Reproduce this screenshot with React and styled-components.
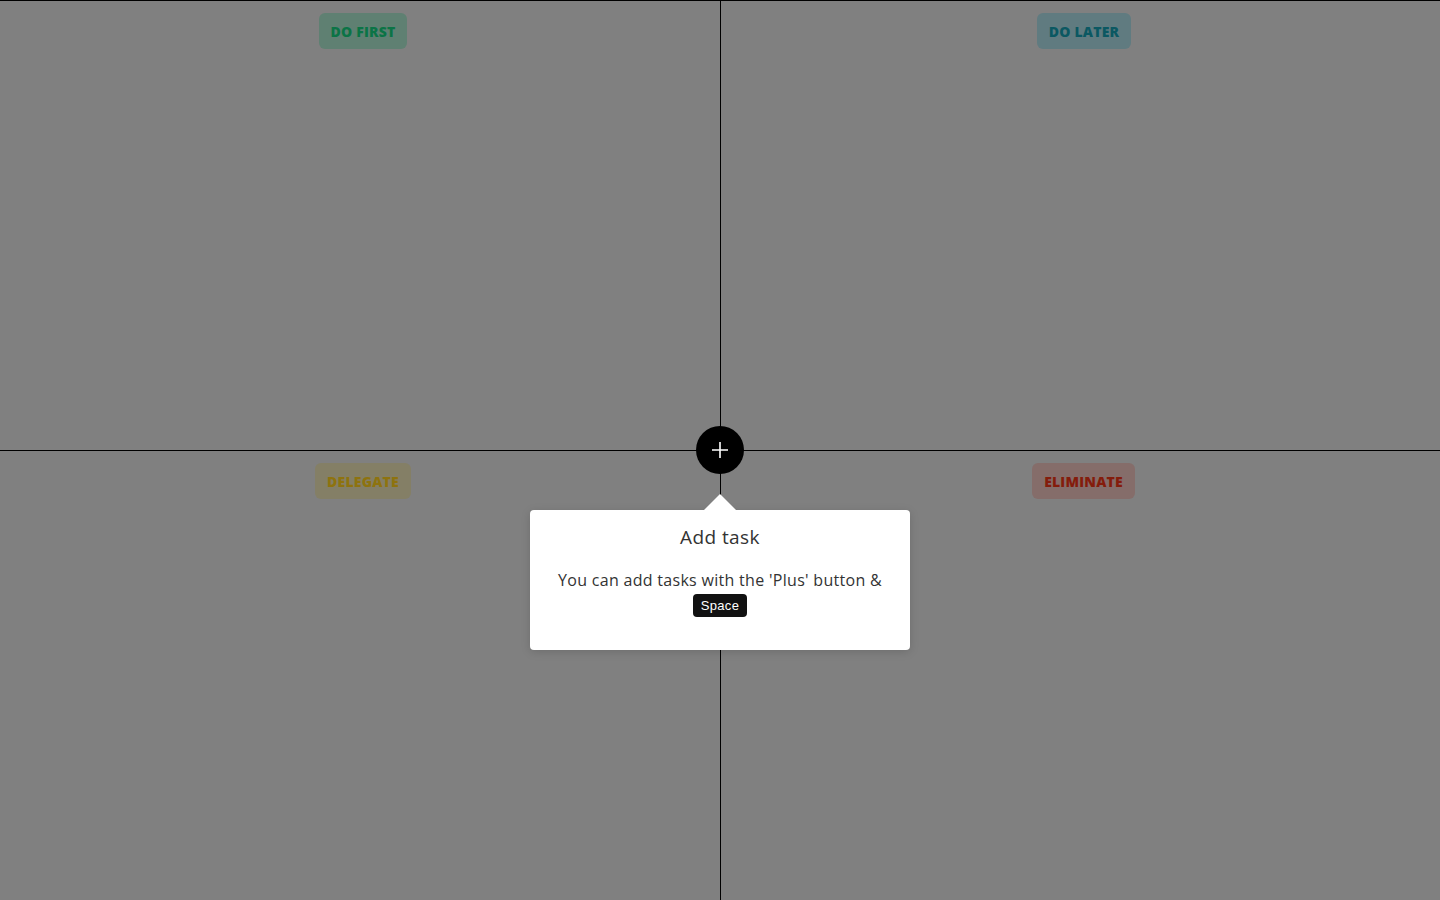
import React from "react";
import styled, { createGlobalStyle } from "styled-components";

const GlobalStyle = createGlobalStyle`
  html, body {
    margin: 0;
    padding: 0;
    background: #808080;
    font-family: "Open Sans", "Noto Sans", sans-serif;
    overflow: hidden;
  }
  * { box-sizing: border-box; }
`;

const Board = styled.div`
  position: relative;
  height: 100vh;
  display: grid;
  grid-template-columns: 720px 1fr;
  grid-template-rows: 449px 1fr;
  gap: 1px;
  padding-top: 1px;
  background: #000;
`;

const Quadrant = styled.section`
  background: #808080;
  display: flex;
  justify-content: center;
  align-items: flex-start;
  padding: 12px 0 0 ${({ $shift }) => $shift}px;
`;

const Badge = styled.span`
  height: 36px;
  padding: 0 12px;
  border-radius: 6px;
  display: inline-flex;
  align-items: center;
  font-size: 14px;
  font-weight: 800;
  letter-spacing: 0.2px;
  text-transform: uppercase;
  background: ${({ $bg }) => $bg};
  color: ${({ $fg }) => $fg};
`;

const PlusButton = styled.button`
  position: absolute;
  left: 696px;
  top: 426px;
  width: 48px;
  height: 48px;
  border-radius: 50%;
  border: none;
  background: #000;
  color: #fff;
  display: flex;
  align-items: center;
  justify-content: center;
  padding: 0;
`;

const Popover = styled.div`
  position: absolute;
  left: 530px;
  top: 510px;
  width: 380px;
  height: 140px;
  background: #fff;
  border-radius: 4px;
  box-shadow: 0 2px 10px rgba(0, 0, 0, 0.15);
  padding: 14px 10px 0;
  text-align: center;
  color: #333;

  &::before {
    content: "";
    position: absolute;
    left: 50%;
    top: -16px;
    margin-left: -16px;
    border-left: 16px solid transparent;
    border-right: 16px solid transparent;
    border-bottom: 16px solid #fff;
  }
`;

const Title = styled.h3`
  margin: 0;
  font-size: 19px;
  font-weight: 400;
  line-height: 27px;
  letter-spacing: 0.4px;
`;

const Body = styled.p`
  margin: 17px 0 0;
  font-size: 16px;
  line-height: 24px;
  letter-spacing: 0.3px;
`;

const Kbd = styled.kbd`
  display: inline-block;
  margin-top: 2px;
  height: 23px;
  padding: 0 8px;
  border-radius: 4px;
  background: #111;
  color: #fff;
  font-family: "Liberation Sans", "DejaVu Sans", sans-serif;
  font-size: 13px;
  line-height: 23px;
`;

const quadrants = [
  { label: "Do first", bg: "#5f8072", fg: "#0b7446", shift: 6 },
  { label: "Do later", bg: "#607b80", fg: "#0b5862", shift: 7 },
  { label: "Delegate", bg: "#847f66", fg: "#8e730e", shift: 6 },
  { label: "Eliminate", bg: "#856d6a", fg: "#841c0c", shift: 6 },
];

export default function App() {
  return (
    <>
      <GlobalStyle />
      <Board>
        {quadrants.map((q) => (
          <Quadrant key={q.label} $shift={q.shift}>
            <Badge $bg={q.bg} $fg={q.fg}>{q.label}</Badge>
          </Quadrant>
        ))}
        <PlusButton aria-label="Add task">
          <svg width="18" height="18" viewBox="0 0 18 18" fill="none" stroke="#fff" strokeWidth="1.6">
            <path d="M9 1v16M1 9h16" />
          </svg>
        </PlusButton>
        <Popover>
          <Title>Add task</Title>
          <Body>
            You can add tasks with the 'Plus' button &amp;
            <br />
            <Kbd>Space</Kbd>
          </Body>
        </Popover>
      </Board>
    </>
  );
}
